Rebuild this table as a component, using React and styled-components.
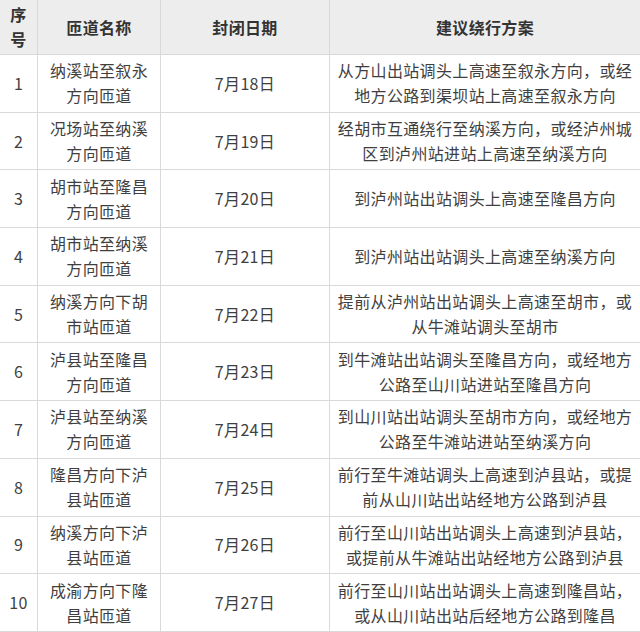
import React from 'react';
import styled, { createGlobalStyle } from 'styled-components';

const GlobalStyle = createGlobalStyle`
  html, body {
    margin: 0;
    padding: 0;
    background: #ffffff;
  }
  body {
    font-family: "Noto Sans CJK SC", "Noto Sans", sans-serif;
  }
`;

const rows = [
  { id: 1, ramp: ['纳溪站至叙永', '方向匝道'], date: '7月18日', plan: ['从方山出站调头上高速至叙永方向，或经', '地方公路到渠坝站上高速至叙永方向'] },
  { id: 2, ramp: ['况场站至纳溪', '方向匝道'], date: '7月19日', plan: ['经胡市互通绕行至纳溪方向，或经泸州城', '区到泸州站进站上高速至纳溪方向'] },
  { id: 3, ramp: ['胡市站至隆昌', '方向匝道'], date: '7月20日', plan: ['到泸州站出站调头上高速至隆昌方向'] },
  { id: 4, ramp: ['胡市站至纳溪', '方向匝道'], date: '7月21日', plan: ['到泸州站出站调头上高速至纳溪方向'] },
  { id: 5, ramp: ['纳溪方向下胡', '市站匝道'], date: '7月22日', plan: ['提前从泸州站出站调头上高速至胡市，或', '从牛滩站调头至胡市'] },
  { id: 6, ramp: ['泸县站至隆昌', '方向匝道'], date: '7月23日', plan: ['到牛滩站出站调头至隆昌方向，或经地方', '公路至山川站进站至隆昌方向'] },
  { id: 7, ramp: ['泸县站至纳溪', '方向匝道'], date: '7月24日', plan: ['到山川站出站调头至胡市方向，或经地方', '公路至牛滩站进站至纳溪方向'] },
  { id: 8, ramp: ['隆昌方向下泸', '县站匝道'], date: '7月25日', plan: ['前行至牛滩站调头上高速到泸县站，或提', '前从山川站出站经地方公路到泸县'] },
  { id: 9, ramp: ['纳溪方向下泸', '县站匝道'], date: '7月26日', plan: ['前行至山川站出站调头上高速到泸县站，', '或提前从牛滩站出站经地方公路到泸县'] },
  { id: 10, ramp: ['成渝方向下隆', '昌站匝道'], date: '7月27日', plan: ['前行至山川站出站调头上高速到隆昌站，', '或从山川站出站后经地方公路到隆昌'] },
];

const Table = styled.div`
  display: grid;
  grid-template-columns: 38px 123px 169px 1fr;
  grid-template-rows: 55px repeat(10, 57.7px);
  width: 640px;
  height: 632px;
  overflow: hidden;
`;

const Cell = styled.div`
  box-sizing: border-box;
  display: flex;
  flex-direction: column;
  align-items: center;
  justify-content: center;
  text-align: center;
  border-bottom: 1px solid #d9d9d9;
  border-right: ${({ $last }) => ($last ? 'none' : '1px solid #d9d9d9')};
  background: ${({ $head }) => ($head ? '#ededed' : '#ffffff')};
  color: ${({ $head }) => ($head ? '#333333' : '#3f3f3f')};
  font-size: 16px;
  font-weight: ${({ $head }) => ($head ? 700 : 400)};
  line-height: 25px;
  letter-spacing: 0.35px;
  white-space: nowrap;
`;

const Line = styled.span`
  display: block;
`;

function Lines({ items }) {
  return items.map((t) => <Line key={t}>{t}</Line>);
}

export default function App() {
  return (
    <>
      <GlobalStyle />
      <Table>
        <Cell $head>
          <Lines items={['序', '号']} />
        </Cell>
        <Cell $head>匝道名称</Cell>
        <Cell $head>封闭日期</Cell>
        <Cell $head $last>建议绕行方案</Cell>
        {rows.map((r) => (
          <React.Fragment key={r.id}>
            <Cell>{r.id}</Cell>
            <Cell>
              <Lines items={r.ramp} />
            </Cell>
            <Cell>{r.date}</Cell>
            <Cell $last>
              <Lines items={r.plan} />
            </Cell>
          </React.Fragment>
        ))}
      </Table>
    </>
  );
}
